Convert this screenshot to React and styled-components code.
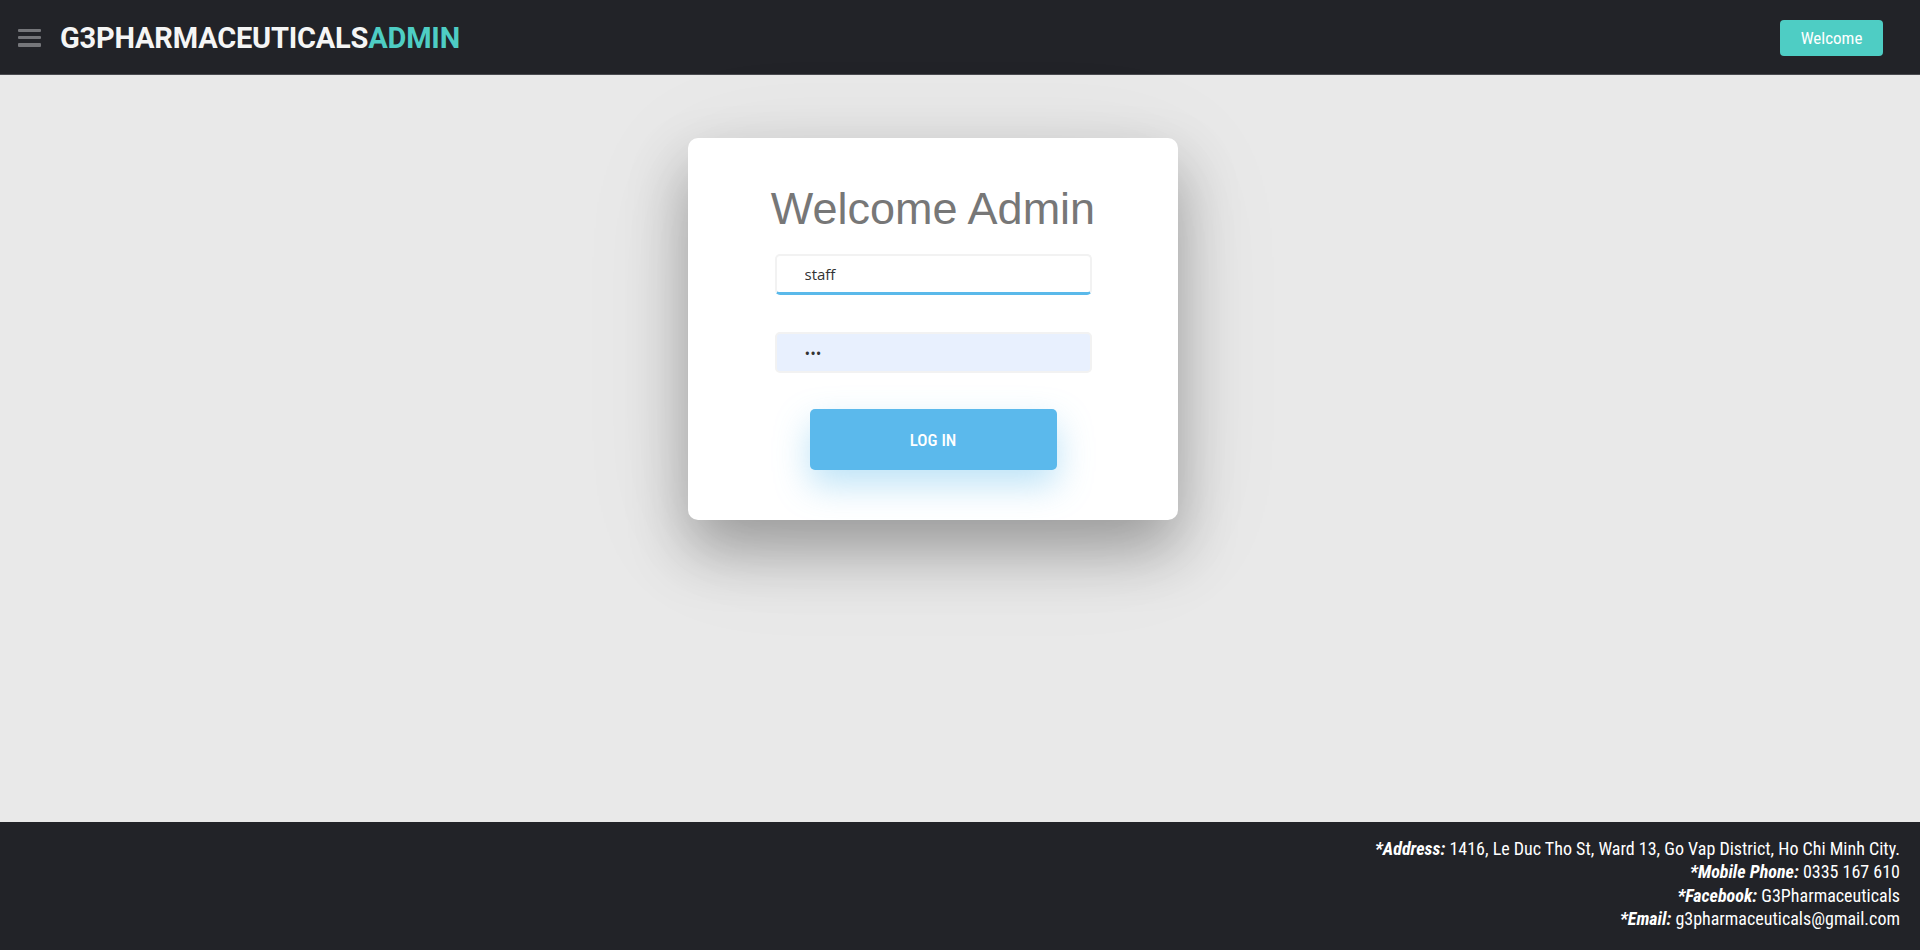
import React from "react";
import styled, { createGlobalStyle } from "styled-components";

const Global = createGlobalStyle`
  html, body { margin: 0; padding: 0; }
  body { font-family: "Roboto Condensed", Roboto, "Liberation Sans", sans-serif; background: #e9e9e9; }
  * { box-sizing: border-box; }
`;

const Page = styled.div`
  min-height: 100vh;
  display: flex;
  flex-direction: column;
`;

const Header = styled.header`
  height: 75px;
  background: #222328;
  border-bottom: 1px solid #4a4b50;
  display: flex;
  align-items: center;
  justify-content: space-between;
  padding: 0 37px 0 18px;
`;

const Brand = styled.div`
  display: flex;
  align-items: center;
  gap: 19px;
`;

const Burger = styled.button`
  width: 23px;
  height: 18px;
  padding: 0;
  margin-top: 1px;
  border: none;
  background: none;
  display: flex;
  flex-direction: column;
  justify-content: space-between;
  cursor: pointer;
  span {
    display: block;
    height: 3.5px;
    background: #75767a;
    border-radius: 1px;
  }
`;

const Logo = styled.div`
  font-family: Roboto, "Liberation Sans", sans-serif;
  font-weight: 700;
  font-size: 29px;
  letter-spacing: -0.2px;
  line-height: 1;
  padding-top: 2px;
  color: #f5f5f5;
  span { color: #4ecdc4; }
`;

const WelcomeBtn = styled.button`
  width: 103px;
  height: 36px;
  margin-top: 1px;
  background: #4ecdc4;
  color: #fff;
  border: none;
  border-radius: 4px;
  font-family: "Roboto Condensed", Roboto, sans-serif;
  font-size: 17px;
`;

const Main = styled.main`
  flex: 1;
  display: flex;
  justify-content: center;
  align-items: flex-start;
  padding: 63px 54px 0 0;
`;

const Card = styled.form`
  width: 490px;
  height: 382px;
  background: #fff;
  border-radius: 10px;
  box-shadow: 0 30px 60px rgba(0, 0, 0, 0.3), 0 20px 120px rgba(0, 0, 0, 0.08);
  display: flex;
  flex-direction: column;
  align-items: center;
  padding-top: 45px;
`;

const Title = styled.h1`
  margin: 0 0 19px;
  font-family: "Liberation Sans", Arial, sans-serif;
  font-weight: 400;
  font-size: 45px;
  line-height: 52px;
  color: #777;
`;

const Input = styled.input`
  width: 317px;
  height: 41px;
  flex: none;
  border: 2px solid #f2f2f2;
  border-bottom: ${(p) => (p.$active ? "3px solid #5ab9ea" : "2px solid #f2f2f2")};
  border-radius: 5px;
  background: ${(p) => (p.$filled ? "#e8f0fe" : "#fff")};
  padding: 0 0 0 28px;
  font-family: "Open Sans", sans-serif;
  font-size: 15px;
  color: #333;
  outline: none;
  margin-bottom: ${(p) => p.$gap}px;
`;

const LoginBtn = styled.button`
  width: 247px;
  height: 61px;
  flex: none;
  border: none;
  border-radius: 5px;
  background: #5bb9ec;
  color: #fff;
  font-family: "Roboto Condensed", Roboto, sans-serif;
  font-size: 17px;
  font-weight: 500;
  box-shadow: 0 15px 35px rgba(91, 185, 236, 0.4);
`;

const Footer = styled.footer`
  height: 128px;
  background: #222328;
  padding: 15px 20px 0 0;
  text-align: right;
  color: #fff;
  font-family: "Roboto Condensed", Roboto, sans-serif;
  font-size: 18px;
  line-height: 23.3px;
  b { font-style: italic; font-weight: 700; }
`;

export default function App() {
  return (
    <Page>
      <Global />
      <Header>
        <Brand>
          <Burger aria-label="menu" type="button">
            <span />
            <span />
            <span />
          </Burger>
          <Logo>
            G3PHARMACEUTICALS<span>ADMIN</span>
          </Logo>
        </Brand>
        <WelcomeBtn type="button">Welcome</WelcomeBtn>
      </Header>
      <Main>
        <Card onSubmit={(e) => e.preventDefault()}>
          <Title>Welcome Admin</Title>
          <Input $active $gap={37} defaultValue="staff" />
          <Input $filled $gap={36} type="password" defaultValue="abc" />
          <LoginBtn type="submit">LOG IN</LoginBtn>
        </Card>
      </Main>
      <Footer>
        <div><b>*Address:</b> 1416, Le Duc Tho St, Ward 13, Go Vap District, Ho Chi Minh City.</div>
        <div><b>*Mobile Phone:</b> 0335 167 610</div>
        <div><b>*Facebook:</b> G3Pharmaceuticals</div>
        <div><b>*Email:</b> g3pharmaceuticals@gmail.com</div>
      </Footer>
    </Page>
  );
}
